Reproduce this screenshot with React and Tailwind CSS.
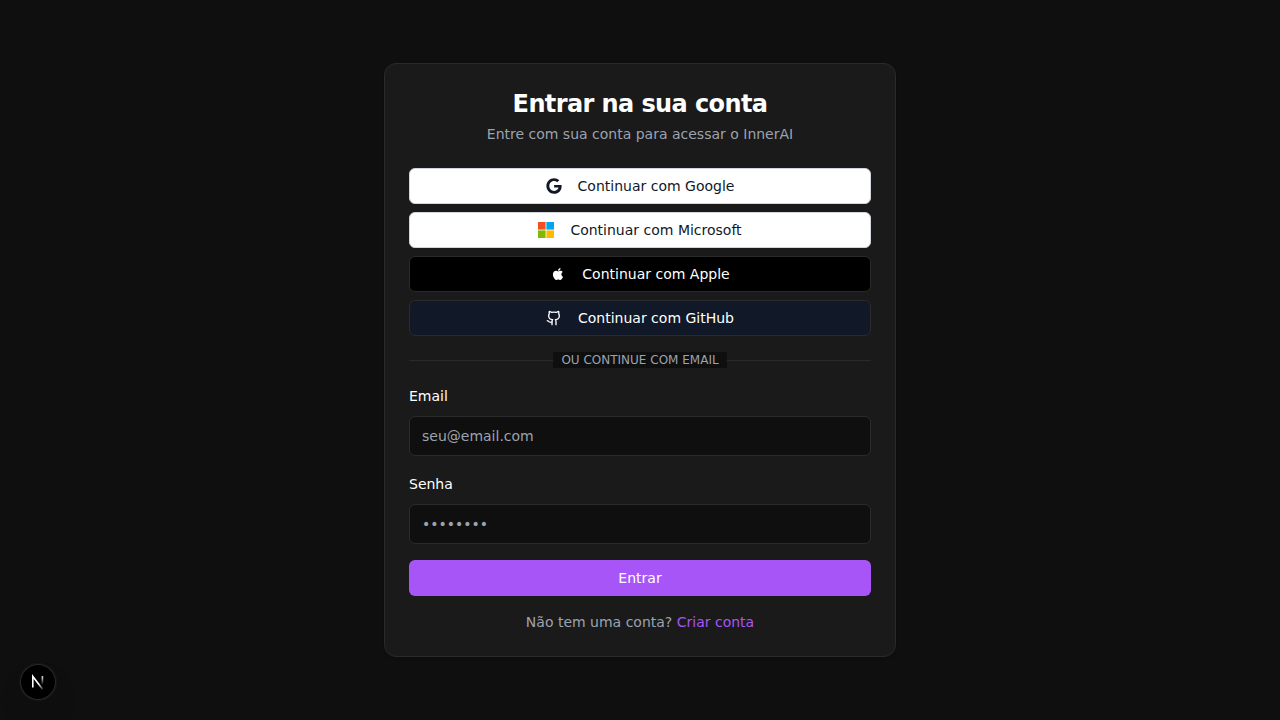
import { Github } from 'lucide-react';

function GoogleIcon() {
  return (
    <svg className="mr-2 h-4 w-4 shrink-0" viewBox="0 0 488 512" aria-hidden="true">
      <path
        fill="currentColor"
        d="M488 261.8C488 403.3 391.1 504 248 504 110.8 504 0 393.2 0 256S110.8 8 248 8c66.8 0 123 24.5 166.3 64.9l-67.5 64.9C258.5 52.6 94.3 116.6 94.3 256c0 86.5 69.1 156.6 153.7 156.6 98.2 0 135-70.4 140.8-106.9H248v-85.3h236.1c2.3 12.7 3.9 24.9 3.9 41.4z"
      />
    </svg>
  );
}

function MicrosoftIcon() {
  return (
    <svg className="mr-2 h-4 w-4 shrink-0" viewBox="0 0 24 24" aria-hidden="true">
      <path fill="#f25022" d="M0 0h11.4v11.4H0z" />
      <path fill="#00a4ef" d="M12.6 0H24v11.4H12.6z" />
      <path fill="#7fba00" d="M0 12.6h11.4V24H0z" />
      <path fill="#ffb900" d="M12.6 12.6H24V24H12.6z" />
    </svg>
  );
}

function AppleIcon() {
  return (
    <svg className="mr-2 h-4 w-4 shrink-0" viewBox="0 0 24 24" fill="currentColor" aria-hidden="true">
      <path d="M17.05 20.28c-.98.95-2.05.8-3.08.35-1.09-.46-2.09-.48-3.24 0-1.44.62-2.2.44-3.06-.35C2.79 15.25 3.51 7.59 9.05 7.31c1.35.07 2.29.74 3.08.8 1.18-.24 2.31-.93 3.57-.84 1.51.12 2.65.72 3.4 1.8-3.12 1.87-2.38 5.98.48 7.13-.57 1.5-1.31 2.99-2.54 4.09l.01-.01zM12.03 7.25c-.15-2.23 1.66-4.07 3.74-4.25.29 2.58-2.34 4.5-3.74 4.25z" />
    </svg>
  );
}

function NextIcon() {
  return (
    <svg className="h-9 w-9" viewBox="0 0 36 36" fill="none" aria-hidden="true">
      <defs>
        <linearGradient id="stem" x1="0" y1="12" x2="0" y2="21" gradientUnits="userSpaceOnUse">
          <stop stopColor="white" />
          <stop offset="1" stopColor="white" stopOpacity="0" />
        </linearGradient>
        <linearGradient id="diagonal" x1="20" y1="19" x2="24" y2="25" gradientUnits="userSpaceOnUse">
          <stop stopColor="white" />
          <stop offset="1" stopColor="white" stopOpacity="0.1" />
        </linearGradient>
      </defs>
      <path d="M12.8 23.6V12.4L22.8 25.4" stroke="url(#diagonal)" strokeWidth="1.6" />
      <path d="M22.4 12.2V20.6" stroke="url(#stem)" strokeWidth="1.6" />
    </svg>
  );
}

const providers = [
  { name: 'Google', icon: <GoogleIcon />, style: 'border-gray-300 bg-white text-gray-900' },
  { name: 'Microsoft', icon: <MicrosoftIcon />, style: 'border-gray-300 bg-white text-gray-900' },
  { name: 'Apple', icon: <AppleIcon />, style: 'border-[#2a2a2a] bg-black text-white' },
  {
    name: 'GitHub',
    icon: <Github className="mr-2 h-4 w-4 shrink-0" aria-hidden="true" />,
    style: 'border-[#2a2a2a] bg-[#111827] text-white',
  },
];

function Field({ id, label, type, placeholder }) {
  return (
    <div className="flex flex-col gap-2">
      <label htmlFor={id} className="text-sm leading-6 font-medium">
        {label}
      </label>
      <input
        id={id}
        type={type}
        placeholder={placeholder}
        className="h-10 w-full rounded-md border border-[#2a2a2a] bg-[#0f0f0f] px-3 py-2 text-sm placeholder:text-[#9ca3af] focus:outline-2 focus:outline-[#a855f7]"
      />
    </div>
  );
}

export default function App() {
  return (
    <div className="flex min-h-screen items-center justify-center bg-[#0f0f0f] font-['DejaVu_Sans',sans-serif] text-white">
      <main className="w-full max-w-lg rounded-xl border border-[#2a2a2a] bg-[#1a1a1a] p-6 shadow-sm">
        <header className="mb-6 flex flex-col gap-1 text-center">
          <h1 className="text-2xl font-bold tracking-tight">Entrar na sua conta</h1>
          <p className="text-sm text-[#9ca3af]">Entre com sua conta para acessar o InnerAI</p>
        </header>

        <div className="flex flex-col gap-4">
          <div className="flex flex-col gap-2">
            {providers.map(({ name, icon, style }) => (
              <button
                key={name}
                type="button"
                className={`flex h-9 w-full items-center justify-center gap-2 rounded-md border px-4 text-sm font-medium ${style}`}
              >
                {icon}
                Continuar com {name}
              </button>
            ))}
          </div>

          <div className="flex items-center">
            <span className="h-px flex-1 bg-[#2a2a2a]" />
            <span className="bg-[#0f0f0f] px-2 text-xs text-[#9ca3af] uppercase">Ou continue com email</span>
            <span className="h-px flex-1 bg-[#2a2a2a]" />
          </div>

          <form className="flex flex-col gap-4" onSubmit={(event) => event.preventDefault()}>
            <Field id="email" label="Email" type="email" placeholder="seu@email.com" />
            <Field id="password" label="Senha" type="password" placeholder="••••••••" />
            <button type="submit" className="h-9 w-full rounded-md bg-[#a855f7] px-4 text-sm font-medium">
              Entrar
            </button>
          </form>

          <p className="text-center text-sm text-[#9ca3af]">
            Não tem uma conta?{' '}
            <a href="#criar-conta" className="text-[#a855f7] hover:underline">
              Criar conta
            </a>
          </p>
        </div>
      </main>

      <button
        type="button"
        aria-label="Next.js"
        className="fixed bottom-5 left-5 flex h-9 w-9 items-center justify-center rounded-full bg-black shadow-[0_0_0_1px_#171717,inset_0_0_0_1px_#2b2b2b,0_16px_32px_-8px_rgba(0,0,0,0.24)]"
      >
        <NextIcon />
      </button>
    </div>
  );
}
